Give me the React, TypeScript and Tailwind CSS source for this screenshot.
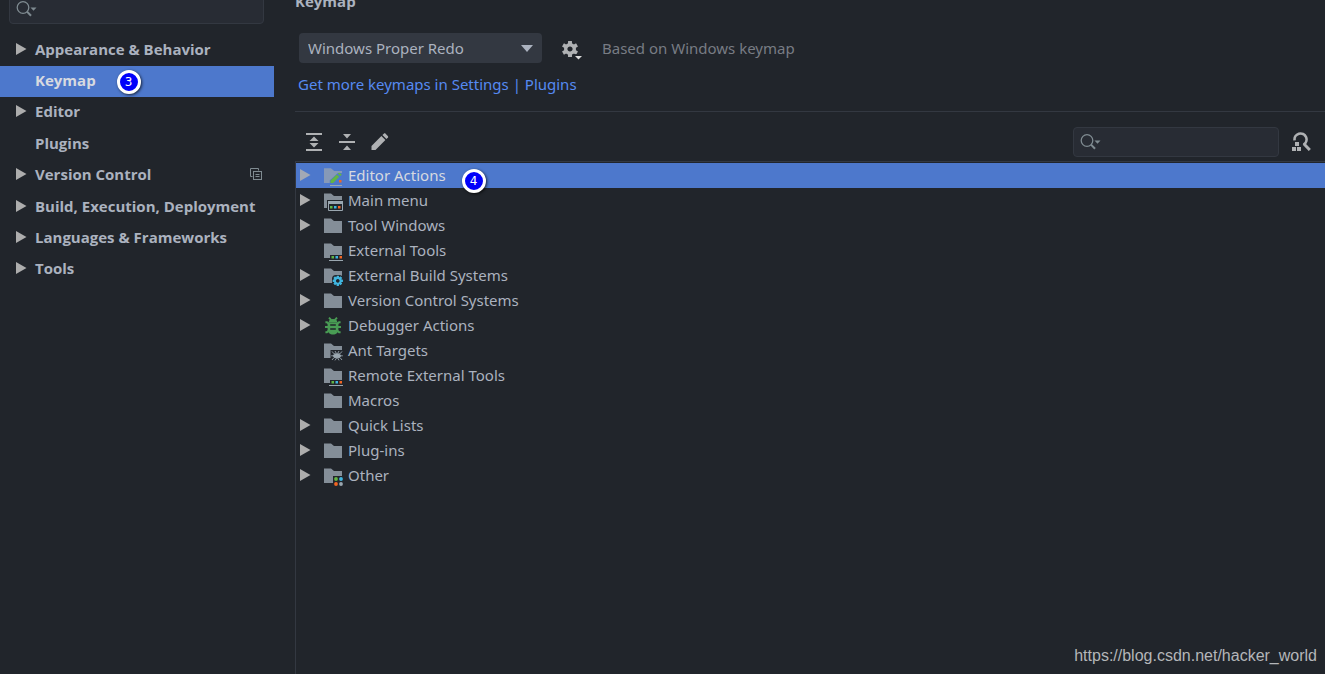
import { useState } from 'react';
import type { ReactNode } from 'react';
import clsx from 'clsx';

type Kind = 'folder' | 'edit' | 'menu' | 'tools' | 'build' | 'debug' | 'ant' | 'other';

const sections = [
  { name: 'Appearance & Behavior', children: true },
  { name: 'Keymap', step: 3 },
  { name: 'Editor', children: true },
  { name: 'Plugins' },
  { name: 'Version Control', children: true, perProject: true },
  { name: 'Build, Execution, Deployment', children: true },
  { name: 'Languages & Frameworks', children: true },
  { name: 'Tools', children: true },
];

const actions: { name: string; icon: Kind; children?: boolean; step?: number }[] = [
  { name: 'Editor Actions', icon: 'edit', children: true, step: 4 },
  { name: 'Main menu', icon: 'menu', children: true },
  { name: 'Tool Windows', icon: 'folder', children: true },
  { name: 'External Tools', icon: 'tools' },
  { name: 'External Build Systems', icon: 'build', children: true },
  { name: 'Version Control Systems', icon: 'folder', children: true },
  { name: 'Debugger Actions', icon: 'debug', children: true },
  { name: 'Ant Targets', icon: 'ant' },
  { name: 'Remote External Tools', icon: 'tools' },
  { name: 'Macros', icon: 'folder' },
  { name: 'Quick Lists', icon: 'folder', children: true },
  { name: 'Plug-ins', icon: 'folder', children: true },
  { name: 'Other', icon: 'other', children: true },
];

function Arrow({ dim }: { dim?: boolean }) {
  return (
    <svg width="11" height="12" viewBox="0 0 11 12" className={dim ? 'text-[#a3a9b5]' : 'text-[#adadad]'}>
      <path d="M0 0L10.5 6L0 12Z" fill="currentColor" />
    </svg>
  );
}

function GearShape({ teeth = 6, hole = 2.6, r = 6 }: { teeth?: number; hole?: number; r?: number }) {
  return (
    <g>
      {Array.from({ length: teeth }, (_, i) => (
        <rect key={i} x={-r * 0.33} y={-r * 1.35} width={r * 0.66} height={r * 0.8} rx="0.4" fill="currentColor" transform={`rotate(${(360 / teeth) * i})`} />
      ))}
      <circle r={(r + hole) / 2} fill="none" stroke="currentColor" strokeWidth={r - hole} />
    </g>
  );
}

// 20px tree icons: a plain folder with an optional overlay in the lower right corner
function NodeIcon({ kind, selected }: { kind: Kind; selected?: boolean }) {
  const bg = selected ? '#4d78cc' : '#21252b';
  if (kind === 'debug') {
    return (
      <svg width="20" height="20" viewBox="0 0 20 20" fill="none" className="mt-0.5">
        <g stroke="#499c54" strokeWidth="1.9">
          <path d="M6 1.6L8.3 4.2M14 1.6L11.7 4.2" />
          <path d="M2.4 6.2H4L6 8M17.6 6.2H16L14 8M2 11H6M18 11H14M2.4 16.2H4L6 14.2M17.6 16.2H16L14 14.2" />
        </g>
        <path d="M5.6 6.4C5.6 4.2 7.6 3 10 3S14.4 4.2 14.4 6.4Z" fill="#499c54" />
        <path d="M4.6 6.4H15.4V13.4C15.4 16.4 13 18.4 10 18.4S4.6 16.4 4.6 13.4Z" fill="#499c54" />
        <path d="M7.2 9H12.8M7.2 13H12.8" stroke="#21252b" strokeWidth="1.6" />
      </svg>
    );
  }
  return (
    <svg width="20" height="20" viewBox="0 0 20 20" fill="none" className="mt-0.5">
      <path d="M1 2.5H8L11 5H19V17H1Z" fill={selected ? '#8699b7' : '#848e98'} />
      {kind === 'edit' && (
        <>
          <path d="M6.5 20V14L14 7H20V20Z" fill={bg} />
          <path d="M1 2.5H8L11 5H19V6.5H15.5L6.5 14.5V17H1Z" fill="#8699b7" />
          <path d="M7.5 17V14.4L13.8 8.6L16.2 10.8L10.2 17Z" fill="#62b543" />
          <path d="M14.8 7.6L16.2 6.4L18.8 8.8L17.4 10Z" fill="#62b543" />
          <rect x="16" y="14" width="2.5" height="2.5" fill="#f26522" />
          <path d="M7 19.5H19" stroke="#9aa7b0" />
        </>
      )}
      {kind === 'menu' && (
        <>
          <rect x="4" y="9" width="16" height="11" fill={bg} />
          <path d="M5.5 10.5H19.5V19.5H5.5Z" stroke="#9aa7b0" />
          <rect x="5" y="10" width="15" height="3" fill="#9aa7b0" />
          <rect x="7" y="15" width="2.5" height="2.5" fill="#62b543" />
          <rect x="11" y="15" width="2.5" height="2.5" fill="#40b6e0" />
          <rect x="15" y="15" width="2.5" height="2.5" fill="#f26522" />
        </>
      )}
      {kind === 'tools' && (
        <>
          <rect x="7" y="14" width="13" height="6" fill={bg} />
          <rect x="8.5" y="15" width="2.5" height="2.5" fill="#62b543" />
          <rect x="12.5" y="15" width="2.5" height="2.5" fill="#40b6e0" />
          <rect x="16.5" y="15" width="2.5" height="2.5" fill="#f26522" />
          <path d="M6 19.5H20" stroke="#9aa7b0" />
        </>
      )}
      {kind === 'build' && (
        <>
          <rect x="9" y="9" width="11" height="11" rx="4" fill={bg} />
          <g transform="translate(14.8 14.8)" className="text-[#40b6e0]">
            <GearShape teeth={8} r={3.8} hole={1.9} />
          </g>
        </>
      )}
      {kind === 'ant' && (
        <>
          <rect x="7.5" y="9" width="12.5" height="11" fill={bg} />
          <g stroke="#9aa7b0" strokeWidth="0.9">
            <path d="M9 10.4L11 12.8H17L19 10.4M8.2 14.8H19.8M9 19L11 16.6H17L19 19M12 10L13.4 12.4M16 10L14.6 12.4M12 19.4L13.6 17M16 19.4L14.6 17" />
          </g>
          <ellipse cx="14" cy="14.8" rx="4" ry="2" fill="#9aa7b0" />
        </>
      )}
      {kind === 'other' && (
        <>
          <rect x="10" y="10" width="10" height="10" fill={bg} />
          <circle cx="13" cy="13" r="1.9" fill="#62b543" />
          <circle cx="18" cy="13" r="1.9" fill="#40b6e0" />
          <circle cx="13" cy="18" r="1.9" fill="#f26522" />
          <circle cx="18" cy="18" r="1.9" fill="#9aa7b0" />
        </>
      )}
    </svg>
  );
}

function StepBadge({ step, className }: { step: number; className: string }) {
  return (
    <span
      className={clsx(
        'absolute z-10 flex size-6 items-center justify-center rounded-full border-3 border-white bg-[#0000fa] font-["DejaVu_Sans",sans-serif] text-xs font-normal text-white shadow-[1px_1px_3px_rgba(0,0,0,0.7)]',
        className
      )}
    >
      {step}
    </span>
  );
}

function SearchBox({ label, className }: { label: string; className: string }) {
  return (
    <label className={clsx('flex h-[30px] items-center rounded-sm border border-[#333841] bg-[#282c34] pl-1.5', className)}>
      <svg width="22" height="18" viewBox="0 0 22 18" fill="none" stroke="#7f8b91" className="shrink-0">
        <circle cx="7" cy="7.5" r="5.8" strokeWidth="1.3" />
        <path d="M11 11.6L15 15.8" strokeWidth="2" />
        <path d="M14.5 7.5H20.5L17.5 10.7Z" fill="#7f8b91" stroke="none" />
      </svg>
      <input type="text" aria-label={label} className="min-w-0 flex-1 bg-transparent px-1 outline-none" />
    </label>
  );
}

function ToolButton({ label, children }: { label: string; children: ReactNode }) {
  return (
    <button type="button" aria-label={label} className="text-[#afb1b3]">
      <svg width="20" height="20" viewBox="0 0 20 20" fill="currentColor">
        {children}
      </svg>
    </button>
  );
}

function Sidebar({ current, onSelect }: { current: string; onSelect: (name: string) => void }) {
  return (
    <aside className="w-[274px] shrink-0">
      <SearchBox label="Search settings" className="-mt-1.5 mr-2.5 ml-[9px]" />
      <nav className="mt-[11px] flex h-[251px] flex-col justify-between font-['Open_Sans','Noto_Sans',sans-serif] font-bold">
        {sections.map((item) => (
          <button
            key={item.name}
            type="button"
            onClick={() => onSelect(item.name)}
            className={clsx('flex h-[31px] items-center pr-3 pb-1 pl-4 text-left', item.name === current && 'bg-[#4d78cc] text-[#d7dae0]')}
          >
            <span className="w-[19px]">{item.children && <Arrow />}</span>
            <span className="relative">
              {item.name}
              {item.step && <StepBadge step={item.step} className="top-0.5 left-full ml-[21px]" />}
            </span>
            {item.perProject && (
              <svg width="12" height="12" viewBox="0 0 12 12" fill="none" stroke="#7f8b91" className="ml-auto">
                <path d="M2.5 8.5H0.5V0.5H8.5V2.5" />
                <rect x="3.5" y="3.5" width="8" height="8" />
                <path d="M5.5 6.5H9.5M5.5 8.5H9.5" />
              </svg>
            )}
          </button>
        ))}
      </nav>
    </aside>
  );
}

function Toolbar() {
  return (
    <div className="flex items-center pr-3.5 pl-[9px]">
      <div className="flex gap-[13px]">
        <ToolButton label="Expand all">
          <path d="M2 1H18V3H2ZM2 17H18V19H2ZM10 4.5L14.5 9H5.5ZM10 15.5L14.5 11H5.5Z" />
        </ToolButton>
        <ToolButton label="Collapse all">
          <path d="M2 9H18V11H2ZM10 6.5L14 2H6ZM10 13.5L14 18H6Z" />
        </ToolButton>
        <ToolButton label="Edit shortcut">
          <path d="M1.5 18V14L11.4 4.1L15.4 8.1L5.5 18ZM12.4 3.1L13.8 1.7C14.3 1.2 15.1 1.2 15.6 1.7L17.8 3.9C18.3 4.4 18.3 5.2 17.8 5.7L16.4 7.1Z" />
        </ToolButton>
      </div>
      <SearchBox label="Search actions" className="mr-3 ml-auto w-[206px]" />
      <ToolButton label="Find actions by shortcut">
        <path d="M3.6 8.4A6 6 0 1 1 12.6 12.6" fill="none" stroke="currentColor" strokeWidth="2.6" />
        <path d="M12.8 11.8L18.8 18" stroke="currentColor" strokeWidth="3" />
        <path d="M4 10H8V14H4ZM1 15H5V19H1ZM6 15H10V19H6Z" />
      </ToolButton>
    </div>
  );
}

export default function App() {
  const [section, setSection] = useState('Keymap');
  const [selected, setSelected] = useState('Editor Actions');

  return (
    <div className="relative flex h-screen gap-[21px] overflow-hidden bg-[#21252b] font-['Noto_Sans','Open_Sans',sans-serif] text-[15px] leading-6 text-[#abb2bf]">
      <Sidebar current={section} onSelect={setSection} />

      <main className="flex min-w-0 flex-1 flex-col">
        <h1 className="-mt-[11px] font-['Open_Sans','Noto_Sans',sans-serif] font-bold">Keymap</h1>

        <div className="mt-5 flex items-center pl-1">
          <div className="relative">
            <select aria-label="Keymap" className="h-[30px] w-[243px] appearance-none rounded-sm bg-[#333841] px-[9px] outline-none">
              <option>Windows Proper Redo</option>
            </select>
            <svg width="12" height="7" viewBox="0 0 12 7" className="pointer-events-none absolute top-3 right-[9px]">
              <path d="M0 0H12L6 7Z" fill="#abb2bf" />
            </svg>
          </div>
          <button type="button" aria-label="Keymap actions" className="ml-[19px] text-[#afb1b3]">
            <svg width="22" height="24" viewBox="0 0 22 24">
              <g transform="translate(9 13)">
                <GearShape />
              </g>
              <path d="M13 19H22L17.5 24Z" fill="#21252b" stroke="#21252b" strokeWidth="1.5" />
              <path d="M14 20H21L17.5 23.5Z" fill="#dcdcdc" />
            </svg>
          </button>
          <span className="ml-[19px] text-[#787c84]">Based on Windows keymap</span>
        </div>

        <a href="#plugins" className="mt-[9px] self-start pl-[3px] text-[#568af2]">
          Get more keymaps in Settings | Plugins
        </a>

        <hr className="my-[15px] border-[#333841]" />

        <Toolbar />

        <ul className="mt-1 flex-1 border-t border-l border-[#333841] pt-px">
          {actions.map((item) => {
            const active = item.name === selected;
            return (
              <li key={item.name}>
                <button
                  type="button"
                  onClick={() => setSelected(item.name)}
                  className={clsx('flex h-[25px] w-full items-center pb-px pl-1 text-left', active && 'bg-[#4d78cc] text-[#d7dae0]')}
                >
                  <span className="w-[23px]">{item.children && <Arrow dim={active} />}</span>
                  <NodeIcon kind={item.icon} selected={active} />
                  <span className="relative ml-[5px]">
                    {item.name}
                    {item.step && <StepBadge step={item.step} className="top-1.5 left-full ml-4" />}
                  </span>
                </button>
              </li>
            );
          })}
        </ul>
      </main>

      <div className="absolute right-2 bottom-1.5 font-['Liberation_Sans',Arial,sans-serif] text-base text-[#b4b6b9]">
        https://blog.csdn.net/hacker_world
      </div>
    </div>
  );
}
